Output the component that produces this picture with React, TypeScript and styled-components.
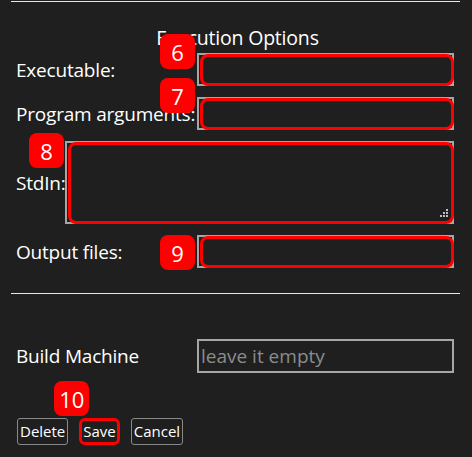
import React from 'react';
import styled, { createGlobalStyle } from 'styled-components';

const GlobalStyle = createGlobalStyle`
  html, body {
    margin: 0;
    padding: 0;
    background: #1f1f1f;
  }
  body {
    font-family: 'Open Sans', 'Noto Sans', sans-serif;
    color: #ffffff;
  }
`;

const Page = styled.div`
  width: 472px;
  height: 457px;
  background: #1f1f1f;
  padding: 1px 12px 0 11px;
  box-sizing: border-box;
  display: flex;
  flex-direction: column;
`;

const Rule = styled.hr<{ $top?: number }>`
  border: none;
  border-top: 1px solid #e8e8e8;
  margin: ${(p) => p.$top ?? 0}px 0 0 0;
  height: 0;
`;

const SectionTitle = styled.div`
  text-align: center;
  font-size: 19.5px;
  line-height: 22px;
  margin: 25px 0 4px 0;
  padding-left: 4px;
  letter-spacing: -0.2px;
`;

const Fields = styled.div`
  display: flex;
  flex-direction: column;
  gap: 11px;
  padding: 0 6px 0 5px;
`;

const Row = styled.div`
  display: flex;
  align-items: center;
`;

const Label = styled.label<{ $width?: number }>`
  font-size: 19px;
  letter-spacing: -0.2px;
  width: ${(p) => (p.$width ? `${p.$width}px` : 'auto')};
  flex-shrink: 0;
  white-space: nowrap;
`;

const Field = styled.div<{ $height: number }>`
  position: relative;
  flex: 1;
  height: ${(p) => p.$height}px;
  border: 2px solid #a6a6a6;
  box-sizing: border-box;
  background: #1f1f1f;
`;

const Highlight = styled.div`
  position: absolute;
  left: 1px;
  top: -1px;
  right: -2px;
  bottom: -2px;
  border: 3px solid #ff0000;
  border-radius: 8px;
  pointer-events: none;
`;

const Grip = styled.svg`
  position: absolute;
  right: 3px;
  bottom: 3px;
`;

const Badge = styled.div<{ $left: number; $top: number }>`
  position: absolute;
  left: ${(p) => p.$left}px;
  top: ${(p) => p.$top}px;
  min-width: 35px;
  height: 35px;
  padding: 0 2px;
  box-sizing: border-box;
  border-radius: 8px;
  background: #ff0000;
  color: #ffffff;
  font-size: 22px;
  font-weight: 500;
  display: flex;
  align-items: center;
  justify-content: center;
  z-index: 2;
`;

const MachineRow = styled(Row)`
  margin-top: 45px;
  padding: 0 6px 0 5px;
`;

const MachineInput = styled.input`
  flex: 1;
  min-width: 0;
  height: 34px;
  box-sizing: border-box;
  border: 2px solid #a6a6a6;
  background: #1f1f1f;
  color: #ffffff;
  font-family: inherit;
  font-size: 19px;
  padding: 0 2px;
  outline: none;
  &::placeholder {
    color: #8c8c8c;
  }
`;

const Buttons = styled.div`
  display: flex;
  gap: 11px;
  margin-top: 45px;
  padding-left: 6px;
`;

const ButtonWrap = styled.div`
  position: relative;
`;

const Button = styled.button<{ $marked?: boolean }>`
  height: 27px;
  padding: 0 ${(p) => (p.$marked ? 1 : 2)}px;
  border: ${(p) => (p.$marked ? '3px solid #ff0000' : '1px solid #8a8a8a')};
  border-radius: ${(p) => (p.$marked ? '6px' : '3px')};
  background: #1f1f1f;
  color: #ffffff;
  font-family: inherit;
  font-size: 15px;
  line-height: 1;
`;

const App = () => {
  return (
    <>
      <GlobalStyle />
      <Page>
        <Rule />
        <SectionTitle>Execution Options</SectionTitle>
        <Fields>
          <Row>
            <Label $width={181}>Executable:</Label>
            <Field $height={33}>
              <Badge $left={-39} $top={-21}>6</Badge>
              <Highlight />
            </Field>
          </Row>
          <Row>
            <Label $width={181}>Program arguments:</Label>
            <Field $height={33}>
              <Badge $left={-39} $top={-21}>7</Badge>
              <Highlight />
            </Field>
          </Row>
          <Row>
            <Label $width={49}>StdIn:</Label>
            <Field $height={83}>
              <Badge $left={-38} $top={-10}>8</Badge>
              <Highlight />
              <Grip width="10" height="10" viewBox="0 0 10 10">
                <g fill="#bdbdbd">
                  <rect x="7" y="0" width="2" height="2" />
                  <rect x="4" y="3" width="2" height="2" />
                  <rect x="7" y="3" width="2" height="2" />
                  <rect x="1" y="6" width="2" height="2" />
                  <rect x="4" y="6" width="2" height="2" />
                  <rect x="7" y="6" width="2" height="2" />
                </g>
              </Grip>
            </Field>
          </Row>
          <Row>
            <Label $width={181}>Output files:</Label>
            <Field $height={33}>
              <Badge $left={-39} $top={-2}>9</Badge>
              <Highlight />
            </Field>
          </Row>
        </Fields>
        <Rule $top={25} />
        <MachineRow>
          <Label $width={181}>Build Machine</Label>
          <MachineInput placeholder="leave it empty" />
        </MachineRow>
        <Buttons>
          <ButtonWrap>
            <Button>Delete</Button>
          </ButtonWrap>
          <ButtonWrap>
            <Badge $left={-25} $top={-37}>10</Badge>
            <Button $marked>Save</Button>
          </ButtonWrap>
          <ButtonWrap>
            <Button>Cancel</Button>
          </ButtonWrap>
        </Buttons>
      </Page>
    </>
  );
};

export default App;
